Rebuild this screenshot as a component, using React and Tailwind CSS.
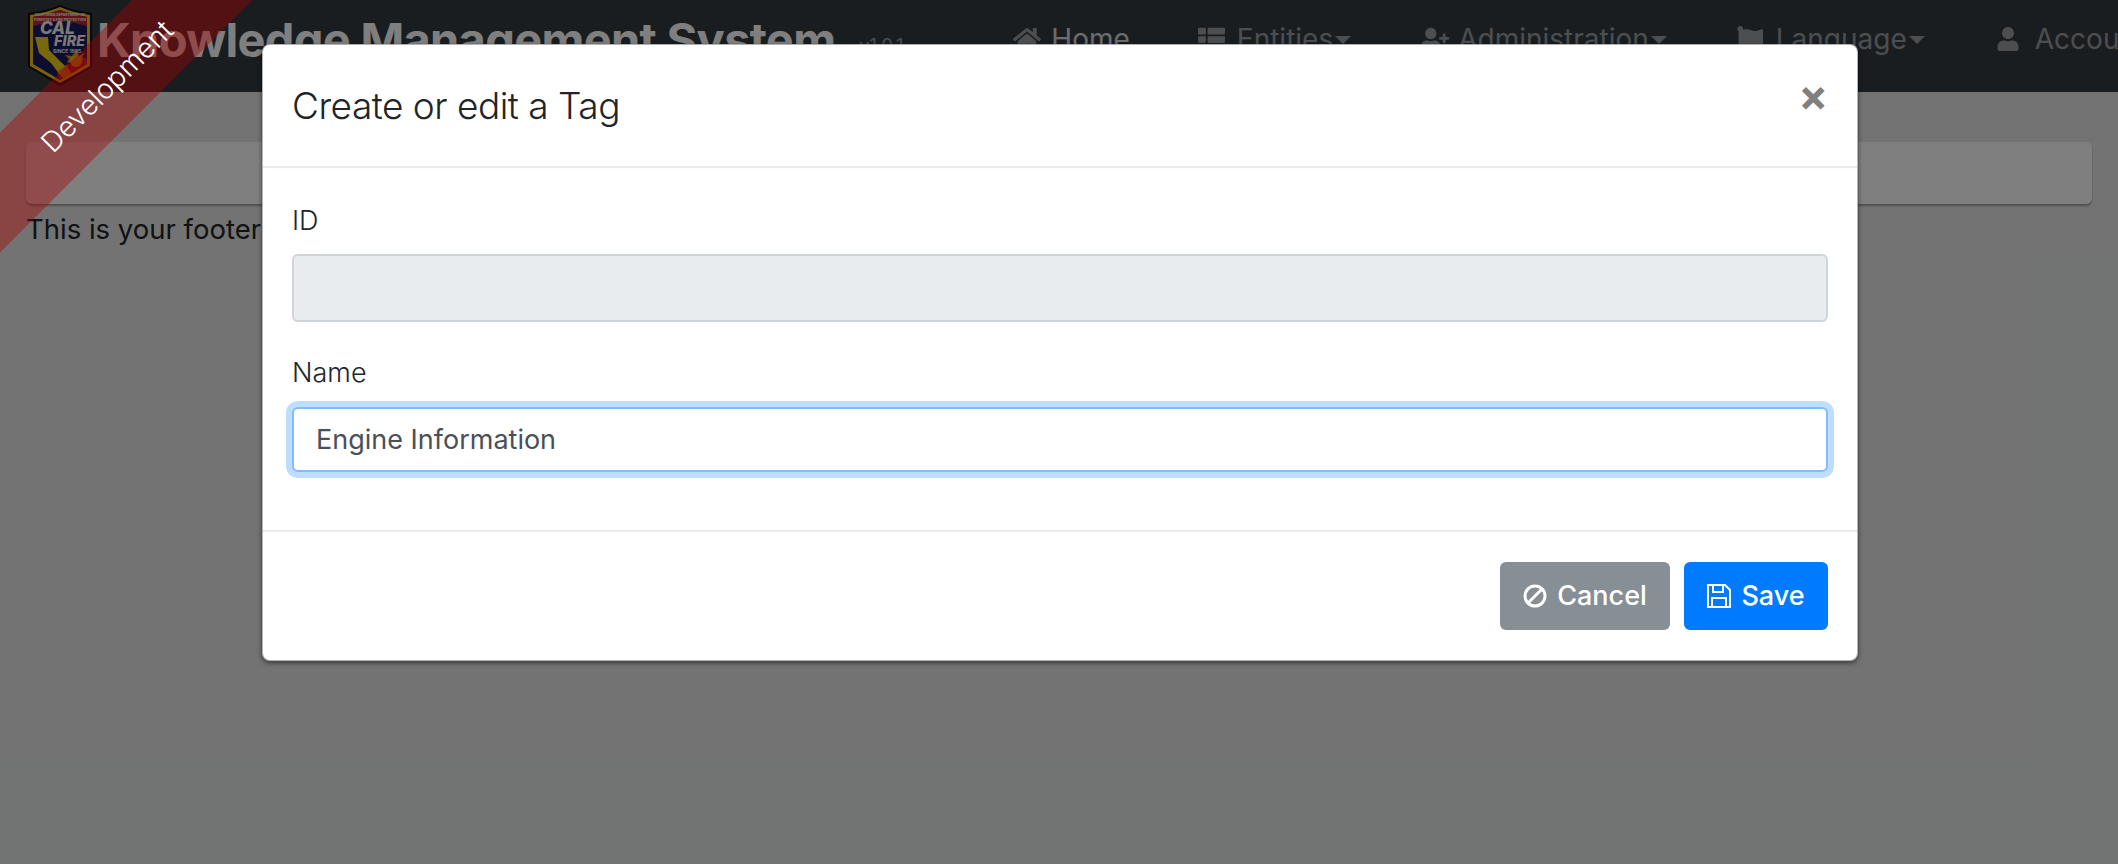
import React from "react";
import { FaHome, FaThList, FaUserPlus, FaFlag, FaUser } from "react-icons/fa";

const CalFireLogo = () => (
  <svg width="70" height="86" viewBox="0 0 70 86" className="mt-[14px] shrink-0">
    <path d="M1 10 Q18 8 33 2 Q48 8 65 10 L65 64 L33 83 L1 64 Z" fill="#111" />
    <path d="M3 12 Q19 10 33 4 Q47 10 63 12 L63 63 L33 80 L3 63 Z" fill="#f2c21a" />
    <path d="M6 14 Q20 12 33 7 Q46 12 60 14 L60 61 L33 77 L6 61 Z" fill="#1b1b5e" />
    <path d="M6 14 Q20 12 33 7 Q46 12 60 14 L60 23 Q46 19 33 18 Q20 19 6 23 Z" fill="#c8202f" />
    <text x="33" y="13" textAnchor="middle" fontSize="3.4" fontWeight="700" fill="#f4f4f4" fontFamily="Inter, sans-serif">CALIFORNIA DEPARTMENT OF</text>
    <text x="33" y="18" textAnchor="middle" fontSize="3.4" fontWeight="700" fill="#f4f4f4" fontFamily="Inter, sans-serif">FORESTRY &amp; FIRE PROTECTION</text>
    <path d="M30 70 L38 62 L60 56 L60 61 L33 77 Z" fill="#c8202f" />
    <path d="M50 46 L52 53 L58 49 L55 55 L60 56 L40 60 L42 56 L38 52 L45 53 Z" fill="#f08a1e" />
    <circle cx="49" cy="58" r="6" fill="#f2b01e" />
    <path d="M8 34 L21 34 L22 47 L43 68 L44 72 L36 75 L30 68 L24 60 L12 50 Z" fill="#f2d21a" />
    <path d="M30 68 L40 62 L44 72 L36 75 Z" fill="#f08a1e" />
    <text x="13" y="31" fontSize="17" fontWeight="800" fontStyle="italic" fill="#f4f4f4" fontFamily="Inter, sans-serif">CAL</text>
    <text x="27" y="43" fontSize="14.5" fontWeight="800" fontStyle="italic" fill="#f4f4f4" fontFamily="Inter, sans-serif">FIRE</text>
    <text x="26" y="50" fontSize="5" fontWeight="700" fill="#f4f4f4" fontFamily="Inter, sans-serif">SINCE 1885</text>
  </svg>
);

const NavItem = ({ icon, label, caret, className }) => (
  <div className={`flex items-center text-[28px] leading-[42px] text-white/50 whitespace-nowrap ${className}`}>
    {icon}
    <span>{label}</span>
    {caret && (
      <span className="ml-[2px] mt-[2px] border-x-[8px] border-t-[8px] border-x-transparent border-t-white/50" />
    )}
  </div>
);

const BanIcon = () => (
  <svg width="24" height="24" viewBox="0 0 24 24" fill="none" stroke="white" strokeWidth="3" className="mr-[10px]">
    <circle cx="12" cy="12" r="10" />
    <path d="M5 19 L19 5" />
  </svg>
);

const SaveIcon = () => (
  <svg width="24" height="24" viewBox="0 0 24 24" fill="none" stroke="white" strokeWidth="2" className="mr-[10px]">
    <path d="M1 1 H18 L23 6 V23 H1 Z" />
    <path d="M6 1 V8 H16 V1" />
    <path d="M5 23 V14 H19 V23" />
  </svg>
);

export default function App() {
  return (
    <div className="relative h-screen w-full overflow-hidden bg-[#e4e7e5] font-['Inter',sans-serif] text-[#212529]">
      {/* page behind the modal */}
      <nav className="flex h-[92px] items-center overflow-hidden bg-[#343a40] pb-[14px] pl-[27px]">
        <CalFireLogo />
        <span className="whitespace-nowrap text-[47px] font-bold leading-none tracking-[-0.7px] text-white">
          Knowledge Management System
        </span>
        <span className="ml-[24px] mt-[12px] whitespace-nowrap text-[18px] text-white/50">v1.0.1</span>
        <div className="ml-[110px] flex shrink-0 items-center">
          <NavItem icon={<FaHome className="mr-[10px] text-[28px] text-white/50" />} label="Home" className="text-white/80" />
          <NavItem icon={<FaThList className="mr-[12px] text-[27px]" />} label="Entities" caret className="ml-[68px]" />
          <NavItem icon={<FaUserPlus className="mr-[9px] text-[28px]" />} label="Administration" caret className="ml-[70px]" />
          <NavItem icon={<FaFlag className="mr-[13px] text-[26px]" />} label="Language" caret className="ml-[70px]" />
          <NavItem icon={<FaUser className="mr-[15px] text-[24px]" />} label="Account" caret className="ml-[71px]" />
        </div>
      </nav>
      <div className="px-[26px] pt-[50px]">
        <div className="h-[62px] rounded-[6px] bg-white shadow-[0_2px_2px_rgba(0,0,0,0.3)]" />
        <p className="mt-[5px] text-[27.5px] leading-[40px]">This is your footer</p>
      </div>

      {/* backdrop + modal */}
      <div className="absolute inset-0 flex justify-center bg-black/50 pl-[2px] pt-[44px]">
        <div className="h-[617px] w-[1596px] rounded-[8px] border border-black/30 bg-white shadow-[0_2px_5px_rgba(0,0,0,0.5)]">
          <div className="flex h-[123px] items-center justify-between border-b-2 border-[#e9ecef] pl-[29px] pr-[29px]">
            <h4 className="text-[37px] font-light leading-none tracking-[-0.5px]">Create or edit a Tag</h4>
            <span className="mb-[22px] text-[44px] font-bold leading-none text-[#808080]">×</span>
          </div>
          <div className="px-[29px] pt-[33px]">
            <label className="block text-[27px] font-light leading-[40px]">ID</label>
            <input
              disabled
              className="mt-[13px] block h-[68px] w-full rounded-[6px] border-2 border-[#ced4da] bg-[#e9ecef]"
            />
            <label className="mt-[31px] block text-[27px] font-light leading-[40px]">Name</label>
            <input
              readOnly
              value="Engine Information"
              className="mt-[14px] block h-[65px] w-full rounded-[6px] border-2 border-[#80bdff] bg-white px-[22px] text-[27px] text-[#495057] shadow-[0_0_0_6px_rgba(0,123,255,0.25)] outline-none"
            />
          </div>
          <div className="mt-[58px] flex justify-end gap-[14px] border-t-2 border-[#e9ecef] pr-[29px] pt-[30px]">
            <button className="flex h-[68px] w-[170px] items-center justify-center rounded-[6px] bg-[#868e96] text-[27px] font-medium text-white">
              <BanIcon />
              Cancel
            </button>
            <button className="flex h-[68px] w-[144px] items-center justify-center rounded-[6px] bg-[#007bff] text-[27px] font-medium text-white">
              <SaveIcon />
              Save
            </button>
          </div>
        </div>
      </div>

      {/* environment ribbon */}
      <div className="absolute left-[-104px] top-[54px] flex h-[85px] w-[400px] -rotate-45 items-center justify-center bg-[rgba(170,0,0,0.4)] text-[28px] font-light text-white">
        <span className="ml-[30px]">Development</span>
      </div>
    </div>
  );
}
